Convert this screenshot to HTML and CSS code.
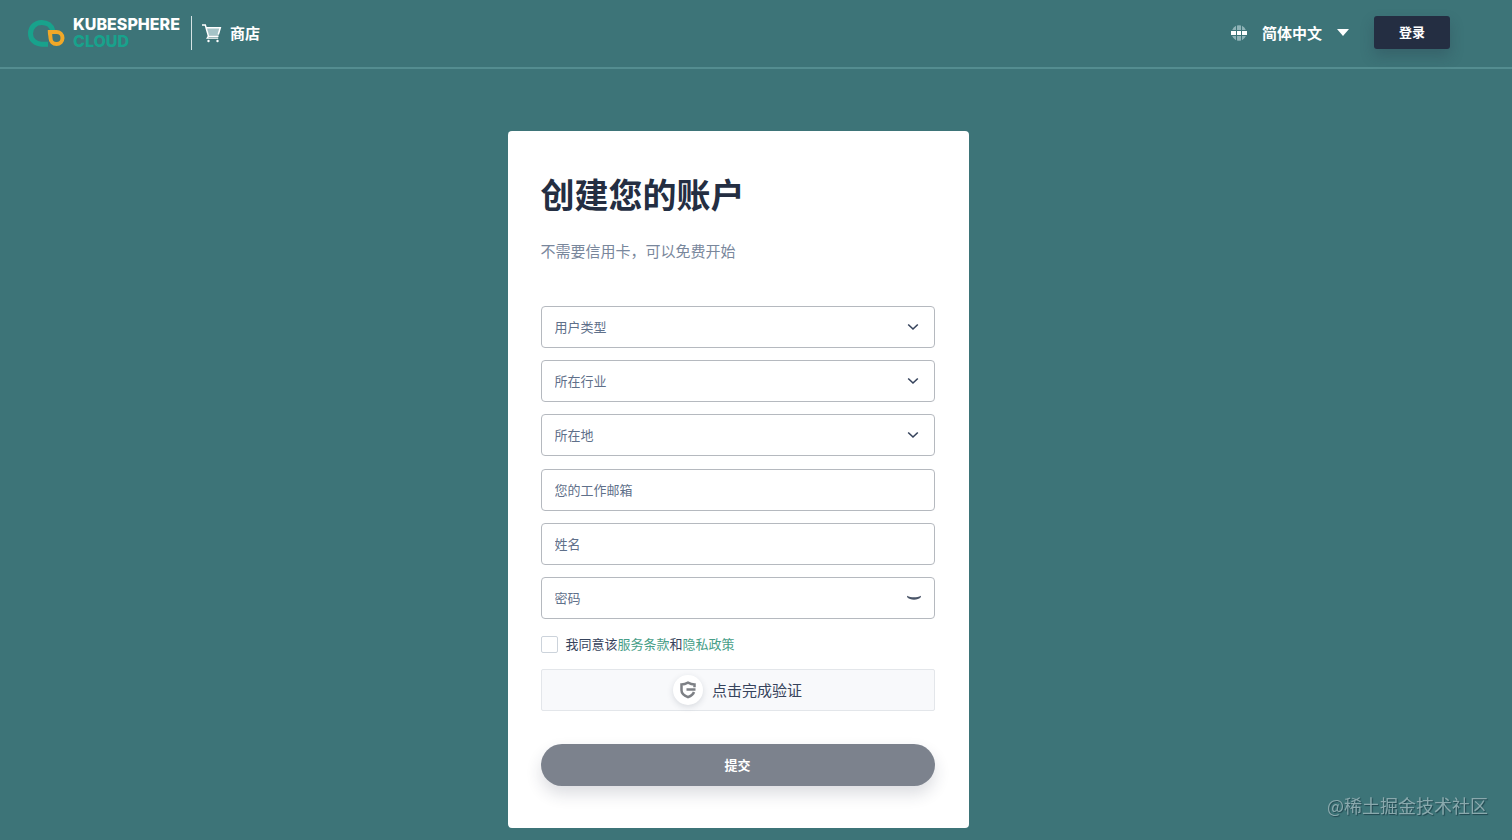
FILE: index.html
```
<!DOCTYPE html>
<html lang="zh-CN">
<head>
    <meta charset="UTF-8">
    <meta name="viewport" content="width=device-width, initial-scale=1.0">
    <title>创建您的账户 - KubeSphere Cloud</title>
    <link rel="stylesheet" href="styles.css">
</head>
<body>
    <header class="header">
        <a class="logo" href="#">
            <svg class="logo-icon" width="38" height="30" viewBox="0 0 38 30" fill="none">
                <path d="M25.800 12.500C24.600 7.500 20.300 4.400 14.800 4.400 8.300 4.400 3.500 9.300 3.500 15.400S8.300 26.200 14.500 26.200H21" stroke="#18a28c" stroke-width="5"/>
                <path d="M20.800 12H29.500a8 8 0 1 1-8 8c0-2.500-.7-2.800-.7-8z" fill="#f0a828"/>
                <path d="M25.200 16h4.300a4 4 0 1 1-4 4c0-1.300-.3-1.500-.3-4z" fill="#3d7478"/>
            </svg>
            <span class="logo-text">
                <span>KUBESPHERE</span>
                <span class="logo-cloud">CLOUD</span>
            </span>
        </a>
        <a class="store" href="#">
            <svg width="20" height="20" viewBox="0 0 20 20" fill="none">
                <path d="M4.500 4.500h14l-2 8H6.500z" fill="#a5c3c7"/>
                <path d="M0 2h3.300l3.200 11.200h10M4 4.800h14.300l-2 6.700" stroke="#fff" stroke-width="1.500"/>
                <path d="M6.500 13.200l-1.300 2h11" stroke="#fff" stroke-width="1.300"/>
                <circle cx="6.500" cy="18" r="1.200" fill="#fff"/>
                <circle cx="15.500" cy="18" r="1.200" fill="#fff"/>
            </svg>
            商店
        </a>
        <div class="header-right">
            <button class="lang" type="button">
                <svg width="16" height="16" viewBox="0 0 16 16">
                    <path d="M5 .8V5H1.200A7.500 7.500 0 0 1 5 .8zM6 .4a8 8 0 0 1 4 0V5H6zM11 .8A7.500 7.500 0 0 1 14.800 5H11zM1.200 11H5v4.200A7.500 7.500 0 0 1 1.200 11zM6 11h4v4.600a8 8 0 0 1-4 0zM11 11h3.800a7.500 7.500 0 0 1-3.800 4.200z" fill="#8fb3b7"/>
                    <path d="M0 6h5v4H0zM6 6h4v4H6zM11 6h5v4h-5z" fill="#fff"/>
                </svg>
                <span>简体中文</span>
                <svg class="caret" width="12" height="7" viewBox="0 0 12 7"><path d="M0 0h12L6 7z" fill="#fff"/></svg>
            </button>
            <button class="login" type="button">登录</button>
        </div>
    </header>

    <main class="main">
        <form class="card">
            <h1>创建您的账户</h1>
            <p class="desc">不需要信用卡，可以免费开始</p>

            <div class="group">
                <div class="field">
                    <select aria-label="用户类型"><option>用户类型</option></select>
                    <svg class="arrow" width="12" height="8" viewBox="0 0 12 8"><path d="M1.200 1.500L6 6l4.800-4.500"/></svg>
                </div>
                <div class="field">
                    <select aria-label="所在行业"><option>所在行业</option></select>
                    <svg class="arrow" width="12" height="8" viewBox="0 0 12 8"><path d="M1.200 1.500L6 6l4.800-4.500"/></svg>
                </div>
                <div class="field">
                    <select aria-label="所在地"><option>所在地</option></select>
                    <svg class="arrow" width="12" height="8" viewBox="0 0 12 8"><path d="M1.200 1.500L6 6l4.800-4.500"/></svg>
                </div>
            </div>
            <div class="group">
                <div class="field">
                    <input type="email" aria-label="您的工作邮箱" placeholder="您的工作邮箱">
                </div>
                <div class="field">
                    <input type="text" aria-label="姓名" placeholder="姓名">
                </div>
                <div class="field">
                    <input type="password" aria-label="密码" placeholder="密码">
                    <button class="eye" type="button" aria-label="显示密码">
                        <svg width="14" height="6" viewBox="0 0 14 6"><path d="M.3 .8c3.500 2 9.900 2 13.400 0l.3 1.200C11 5.600 3 5.600 0 2z" fill="#4a5568"/></svg>
                    </button>
                </div>
            </div>

            <div class="agree">
                <input type="checkbox" id="agree">
                <label for="agree">我同意该<a href="#">服务条款</a>和<a href="#">隐私政策</a></label>
            </div>

            <button class="verify" type="button">
                <span class="verify-icon">
                    <svg width="16" height="18" viewBox="0 0 16 18" fill="none">
                        <path d="M14.500 6.200V3.500C12 3.300 10 2.600 8 1.600 6 2.600 4 3.300 1.500 3.500v5.800c0 3.300 2.500 5.300 6.500 6.900 3.200-1.300 5.200-2.800 6-5.200M15.500 8.500H6.500" stroke="#7d8085" stroke-width="2.500"/>
                    </svg>
                </span>
                点击完成验证
            </button>

            <button class="submit" type="submit">提交</button>
        </form>
    </main>

    <div class="watermark">@稀土掘金技术社区</div>
</body>
</html>
```
FILE: styles.css
```
* {
    box-sizing: border-box;
}

body {
    margin: 0;
    min-height: 100vh;
    background-color: #3d7478;
    color: #242e42;
    font-family: "Noto Sans CJK SC", sans-serif;
}

a {
    text-decoration: none;
}

button, input, select {
    font-family: inherit;
}

button {
    border: none;
    padding: 0;
    cursor: pointer;
}

/* 顶部导航 */
.header {
    display: flex;
    align-items: center;
    height: 69px;
    padding: 0 62px 2px 27px;
    border-bottom: 2px solid #548d90;
}

.logo {
    display: flex;
    align-items: center;
    gap: 8px;
    height: 34px;
    padding-right: 11px;
    border-right: 1px solid #d5e3e4;
}

.logo-text {
    display: flex;
    flex-direction: column;
    color: #fff;
    font-family: Inter, sans-serif;
    font-size: 16px;
    font-weight: 800;
    line-height: 17px;
}

.logo-cloud {
    color: #18a28c;
}

.store {
    display: flex;
    align-items: center;
    gap: 8px;
    margin-left: 10px;
    color: #fff;
    font-size: 15px;
    font-weight: bold;
    line-height: 20px;
}

.header-right {
    display: flex;
    align-items: center;
    gap: 25px;
    margin-left: auto;
}

.lang {
    display: flex;
    align-items: center;
    gap: 15px;
    background: none;
    color: #fff;
    font-size: 15px;
    font-weight: bold;
    line-height: 20px;
}

.login {
    width: 76px;
    height: 33px;
    padding-bottom: 2px;
    border-radius: 3px;
    background-color: #242e42;
    color: #fff;
    font-size: 13px;
    font-weight: bold;
    box-shadow: 0 7px 14px rgba(36, 46, 66, 0.25);
}

/* 注册表单 */
.main {
    display: flex;
    justify-content: center;
    padding: 62px 36px 12px 0;
}

.card {
    display: flex;
    flex-direction: column;
    width: 100%;
    max-width: 461px;
    padding: 38px 34px 42px 33px;
    border-radius: 4px;
    background-color: #fff;
}

h1 {
    margin: 0;
    font-size: 34px;
    line-height: 50px;
}

.desc {
    margin: 21px 0 44px;
    color: #79879c;
    font-size: 15px;
    line-height: 22px;
}

.group {
    display: flex;
    flex-direction: column;
    gap: 12px;
    margin-bottom: 13px;
}

.field {
    position: relative;
    display: flex;
}

.field input, .field select {
    width: 100%;
    height: 42px;
    padding: 0 13px 2px;
    border: 1px solid #b5b9bf;
    border-radius: 4px;
    background-color: #fff;
    color: #5f708a;
    font-size: 13px;
    appearance: none;
}

.field input::placeholder {
    color: #5f708a;
}

.arrow {
    position: absolute;
    top: 17px;
    right: 16px;
    fill: none;
    stroke: #36435c;
    stroke-width: 1.6;
    pointer-events: none;
}

.eye {
    position: absolute;
    top: 18px;
    right: 14px;
    display: flex;
    background: none;
}

.agree {
    display: flex;
    align-items: center;
    gap: 8px;
    margin-top: 3px;
    color: #36435c;
    font-size: 13px;
    line-height: 18px;
}

.agree input {
    width: 17px;
    height: 17px;
    margin: 0;
    border: 1px solid #ccd3db;
    border-radius: 2px;
    background-color: #fff;
    appearance: none;
}

.agree input:checked {
    background-color: #479e88;
}

.agree a {
    color: #479e88;
}

.verify {
    display: flex;
    align-items: center;
    justify-content: center;
    gap: 9px;
    height: 42px;
    margin-top: 16px;
    border: 1px solid #e3e6ea;
    border-radius: 2px;
    background-color: #f8f9fb;
    color: #36435c;
    font-size: 15px;
    line-height: 20px;
}

.verify-icon {
    display: flex;
    align-items: center;
    justify-content: center;
    width: 30px;
    height: 30px;
    border-radius: 50%;
    background-color: #fff;
    box-shadow: 0 2px 6px rgba(36, 46, 66, 0.15);
}

.submit {
    height: 42px;
    margin-top: 33px;
    padding-bottom: 2px;
    border-radius: 21px;
    background-color: #7c828d;
    color: #fff;
    font-size: 13px;
    font-weight: bold;
    box-shadow: 0 8px 16px rgba(36, 46, 66, 0.16);
}

.watermark {
    position: fixed;
    right: 24px;
    bottom: 22px;
    color: #8aa9ad;
    font-size: 18px;
    line-height: 26px;
    text-shadow: 1px 1px 1px rgba(20, 50, 60, 0.7);
}
```
